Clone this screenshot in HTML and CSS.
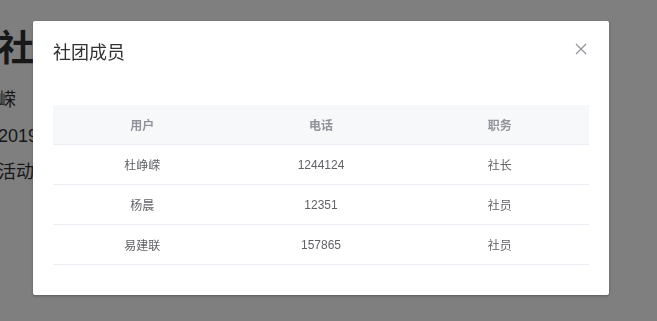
FILE: index.html
```html
<!DOCTYPE html>
<html lang="zh-CN">
<head>
  <meta charset="UTF-8">
  <meta name="viewport" content="width=device-width, initial-scale=1.0">
  <title>社团详情</title>
  <link rel="stylesheet" href="styles.css">
</head>
<body>
  <div class="page">
    <h1 class="club-name">球社团</h1>
    <p class="club-line">杜峥嵘</p>
    <p class="club-line">时间2019-09-01</p>
    <p class="club-line">社团活动</p>
  </div>

  <div class="modal">
    <div class="dialog">
      <div class="dialog-header">
        <span class="dialog-title">社团成员</span>
        <button class="dialog-close" aria-label="关闭">
          <svg width="12" height="12" viewBox="0 0 12 12">
            <path d="M1 1 L11 11 M11 1 L1 11" stroke="#909399" stroke-width="1.2" fill="none"/>
          </svg>
        </button>
      </div>
      <div class="dialog-body">
        <table class="member-table">
          <thead>
            <tr><th>用户</th><th>电话</th><th>职务</th></tr>
          </thead>
          <tbody>
            <tr><td>杜峥嵘</td><td>1244124</td><td>社长</td></tr>
            <tr><td>杨晨</td><td>12351</td><td>社员</td></tr>
            <tr><td>易建联</td><td>157865</td><td>社员</td></tr>
          </tbody>
        </table>
      </div>
    </div>
  </div>
</body>
</html>
```

FILE: styles.css
```css
body, html {
  margin: 0;
  padding: 0;
  height: 100%;
  overflow: hidden;
  font-family: "Liberation Sans", "Noto Sans CJK SC", sans-serif;
  background: #fff;
  color: #303133;
}
.page {
  margin-left: -38px;
  padding-top: 25px;
}
.club-name {
  margin: 0 0 9px 0;
  font-size: 36px;
  line-height: 48px;
  font-weight: bold;
}
.club-line {
  margin: 0;
  font-size: 18px;
  line-height: 36px;
}
.modal {
  position: fixed;
  top: 0;
  left: 0;
  right: 0;
  bottom: 0;
  background: rgba(0, 0, 0, 0.5);
  padding: 21px 0 0 33px;
}
.dialog {
  width: 576px;
  background: #fff;
  border-radius: 2px;
  box-shadow: 0 1px 3px rgba(0, 0, 0, 0.3);
}
.dialog-header {
  display: flex;
  justify-content: space-between;
  align-items: center;
  padding: 20px 20px 10px 20px;
}
.dialog-title {
  font-size: 18px;
  line-height: 24px;
  color: #303133;
}
.dialog-close {
  display: flex;
  align-items: center;
  justify-content: center;
  width: 16px;
  height: 16px;
  padding: 0;
  border: none;
  background: none;
  cursor: pointer;
  margin-top: -8px;
}
.dialog-body {
  padding: 30px 20px;
}
.member-table {
  width: 100%;
  border-collapse: collapse;
  table-layout: fixed;
  font-size: 12px;
}
.member-table th,
.member-table td {
  height: 39px;
  padding: 0;
  text-align: center;
  border-bottom: 1px solid #ebeef5;
}
.member-table th {
  background: #f7f8fa;
  color: #909399;
  font-weight: bold;
}
.member-table td {
  color: #606266;
}
```
